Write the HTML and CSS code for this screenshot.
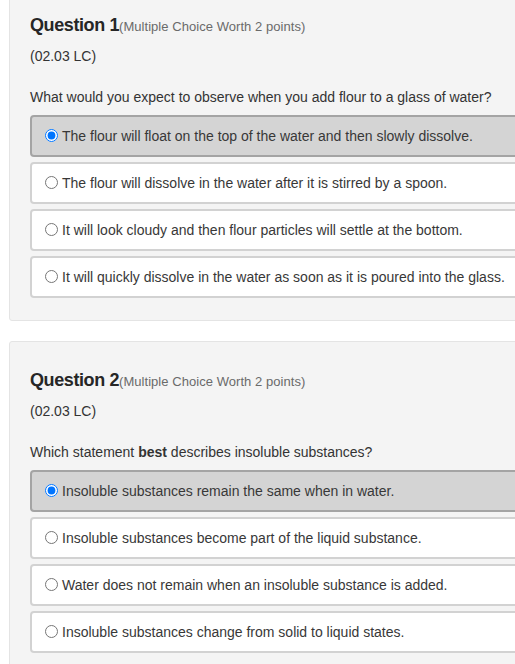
FILE: index.html
```html
<!DOCTYPE html>
<html lang="en">
<head>
<meta charset="utf-8">
<title>Questions</title>
<link rel="stylesheet" href="styles.css">
</head>
<body>
<div class="page">
  <section class="card card-first">
    <h2 class="q-title">Question 1<span class="q-meta">(Multiple Choice Worth 2 points)</span></h2>
    <p class="q-code">(02.03 LC)</p>
    <p class="q-text">What would you expect to observe when you add flour to a glass of water?</p>
    <div class="options">
      <label class="option selected"><input type="radio" name="q1" checked><span>The flour will float on the top of the water and then slowly dissolve.</span></label>
      <label class="option"><input type="radio" name="q1"><span>The flour will dissolve in the water after it is stirred by a spoon.</span></label>
      <label class="option"><input type="radio" name="q1"><span>It will look cloudy and then flour particles will settle at the bottom.</span></label>
      <label class="option"><input type="radio" name="q1"><span>It will quickly dissolve in the water as soon as it is poured into the glass.</span></label>
    </div>
  </section>
  <section class="card">
    <h2 class="q-title">Question 2<span class="q-meta">(Multiple Choice Worth 2 points)</span></h2>
    <p class="q-code">(02.03 LC)</p>
    <p class="q-text">Which statement <b>best</b> describes insoluble substances?</p>
    <div class="options">
      <label class="option selected"><input type="radio" name="q2" checked><span>Insoluble substances remain the same when in water.</span></label>
      <label class="option"><input type="radio" name="q2"><span>Insoluble substances become part of the liquid substance.</span></label>
      <label class="option"><input type="radio" name="q2"><span>Water does not remain when an insoluble substance is added.</span></label>
      <label class="option"><input type="radio" name="q2"><span>Insoluble substances change from solid to liquid states.</span></label>
    </div>
  </section>
</div>
</body>
</html>
```
FILE: styles.css
```css
html, body {
  margin: 0;
  padding: 0;
  background: #ffffff;
  overflow: hidden;
}
body {
  font-family: "Liberation Sans", Arial, sans-serif;
  color: #333333;
  font-size: 14px;
}
.page {
  display: flex;
  flex-direction: column;
  gap: 20px;
  padding-left: 9px;
}
.card {
  width: 600px;
  background: #f4f4f4;
  border: 1px solid #e4e4e4;
  border-radius: 3px;
  padding: 28px 20px 22px 20px;
  box-sizing: border-box;
}
.card-first {
  margin-top: -14px;
}
.q-title {
  margin: 0;
  font-size: 18px;
  line-height: 20px;
  font-weight: bold;
  letter-spacing: -0.4px;
  color: #262626;
}
.q-meta {
  font-size: 13px;
  font-weight: normal;
  letter-spacing: 0.05px;
  color: #6a6a6a;
}
.q-code {
  margin: 9px 0 0 0;
  line-height: 20px;
}
.q-text {
  margin: 21px 0 0 0;
  line-height: 20px;
}
.options {
  margin-top: 8px;
  display: flex;
  flex-direction: column;
  gap: 5px;
}
.option {
  display: flex;
  align-items: center;
  height: 42px;
  box-sizing: border-box;
  background: #ffffff;
  border: 2px solid #d2d2d2;
  border-radius: 4px;
  padding-left: 12px;
  padding-bottom: 1px;
  font-size: 14px;
  color: #383838;
}
.option.selected {
  background: #d4d4d4;
  border-color: #a4a4a4;
}
.option input {
  margin: 0 4px 0 1px;
  width: 13px;
  height: 13px;
}
```
